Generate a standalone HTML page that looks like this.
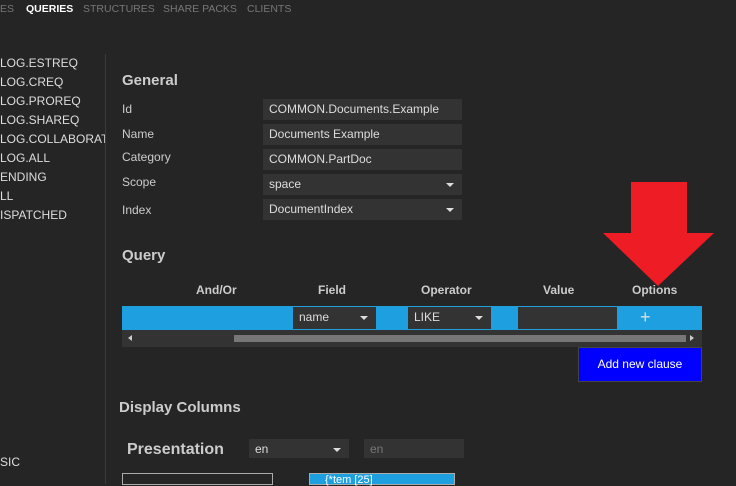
<!DOCTYPE html>
<html><head><meta charset="utf-8"><style>
*{margin:0;padding:0;box-sizing:border-box}
body{width:736px;height:482px;overflow:hidden;background:#252525;font-family:"Liberation Sans",sans-serif;color:#ddd;position:relative;font-size:12px}
.a{position:absolute;white-space:nowrap}
.nav{top:3px;font-size:10.5px;color:#777}
.side{left:0;font-size:12px;color:#ddd}
.lbl{left:122px;font-size:12px;color:#ccc}
.inp{position:absolute;left:263px;width:199px;height:21px;background:#333;color:#ddd;font-size:12px;padding:3px 0 0 6px}
.dd:after{content:"";position:absolute;right:8px;top:9px;border:4px solid transparent;border-top:4px solid #ddd;border-bottom:0}
h2{position:absolute;font-size:15px;font-weight:bold;color:#ccc}
.th{top:283px;font-size:12px;font-weight:bold;color:#ccc}
</style></head><body>
<div class="a nav" style="left:0">ES</div>
<div class="a nav" style="left:26px;color:#fff;font-weight:bold">QUERIES</div>
<div class="a nav" style="left:83px">STRUCTURES</div>
<div class="a nav" style="left:163px">SHARE PACKS</div>
<div class="a nav" style="left:247px">CLIENTS</div>
<div style="position:absolute;left:105px;top:54px;width:1px;height:430px;background:#3a3a3a"></div>
<div class="a side" style="top:56px">LOG.ESTREQ</div>
<div class="a side" style="top:75px">LOG.CREQ</div>
<div class="a side" style="top:94px">LOG.PROREQ</div>
<div class="a side" style="top:113px">LOG.SHAREQ</div>
<div class="a side" style="top:132px;width:105px;overflow:hidden">LOG.COLLABORATIVE</div>
<div class="a side" style="top:151px">LOG.ALL</div>
<div class="a side" style="top:170px">ENDING</div>
<div class="a side" style="top:189px">LL</div>
<div class="a side" style="top:208px">ISPATCHED</div>
<div class="a side" style="top:455px">SIC</div>
<h2 style="left:122px;top:72px">General</h2>
<div class="a lbl" style="top:102px">Id</div>
<div class="a lbl" style="top:127px">Name</div>
<div class="a lbl" style="top:150px">Category</div>
<div class="a lbl" style="top:175px">Scope</div>
<div class="a lbl" style="top:203px">Index</div>
<div class="inp" style="top:99px">COMMON.Documents.Example</div>
<div class="inp" style="top:124px">Documents Example</div>
<div class="inp" style="top:149px">COMMON.PartDoc</div>
<div class="inp dd" style="top:174px">space</div>
<div class="inp dd" style="top:199px">DocumentIndex</div>
<h2 style="left:122px;top:247px">Query</h2>
<div class="a th" style="left:196px">And/Or</div>
<div class="a th" style="left:318px">Field</div>
<div class="a th" style="left:421px">Operator</div>
<div class="a th" style="left:543px">Value</div>
<div class="a th" style="left:632px">Options</div>
<div style="position:absolute;left:122px;top:306px;width:580px;height:24px;background:#1ea0e0"></div>
<div class="inp dd" style="left:293px;top:307px;width:83px;height:22px;padding-left:6px">name</div>
<div class="inp dd" style="left:408px;top:307px;width:83px;height:22px;padding-left:6px">LIKE</div>
<div class="inp" style="left:518px;top:307px;width:99px;height:22px"></div>
<div class="a" style="left:640px;top:307px;font-size:18px;color:#ddd">+</div>
<div style="position:absolute;left:122px;top:330px;width:580px;height:17px;background:#333"></div>
<div style="position:absolute;left:234px;top:335px;width:452px;height:7px;background:#777"></div>
<div style="position:absolute;left:128px;top:335px;border:3px solid transparent;border-right:4px solid #ccc;border-left:0"></div>
<div style="position:absolute;left:690px;top:335px;border:3px solid transparent;border-left:4px solid #ccc;border-right:0"></div>
<div class="a" style="left:578px;top:347px;width:124px;height:35px;background:#0000ff;border:1px solid #444;color:#fff;text-align:center;line-height:33px;font-size:12px">Add new clause</div>
<h2 style="left:119px;top:399px">Display Columns</h2>
<h2 style="left:127px;top:441px;font-size:16px">Presentation</h2>
<div class="inp dd" style="left:249px;top:439px;width:100px;height:19px;padding-top:3px">en</div>
<div class="inp" style="left:364px;top:439px;width:100px;height:19px;color:#777;padding-top:3px">en</div>
<div style="position:absolute;left:122px;top:473px;width:151px;height:12px;border:1px solid #aaa"></div>
<div class="a" style="left:309px;top:473px;width:146px;height:12px;background:#1ea0e0;border:1px solid #aaa;color:#fff;font-size:11px;padding-left:15px;line-height:12px">{*tem [25]</div>
<svg style="position:absolute;left:0;top:0" width="736" height="482"><polygon points="631,182 687,182 687,233 714,233 658,286 603,233 631,233" fill="#ee1c24"/></svg>
</body></html>
